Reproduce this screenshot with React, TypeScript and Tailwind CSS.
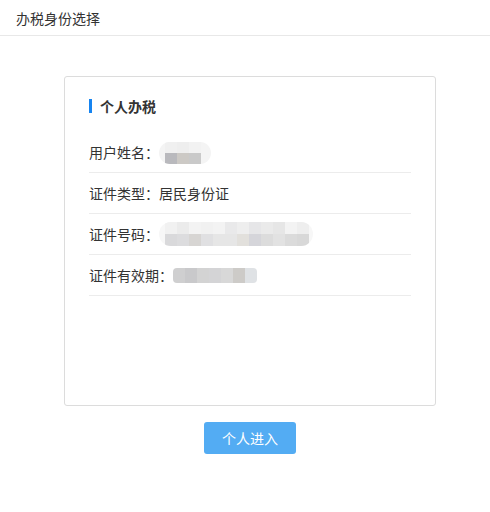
const font = { fontFamily: '"Noto Sans CJK SC", "Noto Sans", sans-serif' };

function Mosaic({ rows, h = "h-[11px]" }: { rows: string[][]; h?: string }) {
  return (
    <div className="flex flex-col blur-[0.6px]">
      {rows.map((r, i) => (
        <div key={i} className="flex">
          {r.map((c, j) => (
            <div key={j} className={`w-3 ${h}`} style={{ background: c }} />
          ))}
        </div>
      ))}
    </div>
  );
}

function Row({ label, children }: { label: string; children?: React.ReactNode }) {
  return (
    <div className="h-[41px] flex items-center border-b border-[#ececec] text-sm text-[#333]">
      <span>{label}</span>
      {children}
    </div>
  );
}

export default function App() {
  return (
    <div className="w-[490px] h-[512px] bg-white" style={font}>
      <div className="h-9 border-b border-[#e8e8e8] flex items-center pl-4 text-sm text-[#333]">
        办税身份选择
      </div>
      <div className="flex flex-col items-center pt-10 pl-[10px]">
        <div className="w-[372px] h-[330px] border border-[#dcdcdc] rounded-[3px] px-6 pt-[20px]">
          <div className="flex items-center gap-2 h-[18px] mb-[25px]">
            <div className="w-[3px] h-[14px] bg-[#1684f0]" />
            <span className="text-sm font-bold text-[#333]">个人办税</span>
          </div>
          <div className="-mt-[8px]">
            <Row label="用户姓名：">
              <div className="rounded-full overflow-hidden bg-[#f4f4f4] pl-[6px] pr-[10px] mt-[1px]">
                <Mosaic
                  rows={[
                    ["#f0f0f0", "#eeeeee", "#f2f2f2"],
                    ["#b9b9bd", "#ccc9c5", "#c9c9c9"],
                  ]}
                />
              </div>
            </Row>
            <Row label="证件类型：居民身份证" />
            <Row label="证件号码：">
              <div className="rounded-xl overflow-hidden bg-[#f7f7f7] pl-[6px] pr-[4px]">
                <Mosaic
                  h="h-[12px]"
                  rows={[
                    ["#f1f1f1", "#ebebeb", "#f3f3f3", "#f1f1f1", "#f3f3f3", "#e9e9ea", "#eeeeee", "#e6e6e8", "#eaeaea", "#e6e6e6", "#f3f3f3", "#eeeeee"],
                    ["#d9d9db", "#dcdcde", "#d7d5d3", "#e0e0e2", "#e6e6e6", "#e6e6e6", "#e2e0dc", "#d5d5da", "#dcdcdc", "#e2e2e2", "#dbdbdb", "#d8d8d8"],
                  ]}
                />
              </div>
            </Row>
            <Row label="证件有效期：">
              <div className="rounded-sm overflow-hidden">
                <Mosaic
                  h="h-[15px]"
                  rows={[
                    ["#cfcfd0", "#c9c9cb", "#d3d3d3", "#d4d4d6", "#d8d8d8", "#cdcbc8", "#dfe2e5"],
                  ]}
                />
              </div>
            </Row>
          </div>
        </div>
        <button className="mt-4 w-[92px] h-[32px] rounded-[3px] bg-[#53acf3] text-white text-sm">
          个人进入
        </button>
      </div>
    </div>
  );
}
